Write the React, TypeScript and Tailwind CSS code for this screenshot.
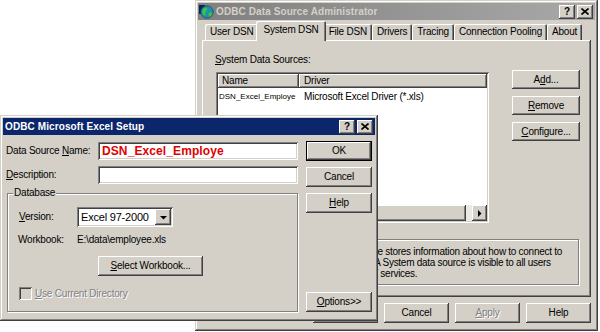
import React from "react";

// classic Win2000 bevels
const raised =
  "shadow-[inset_-1px_-1px_#404040,inset_1px_1px_#ffffff,inset_-2px_-2px_#808080,inset_2px_2px_#d4d0c8]";
const sunken =
  "shadow-[inset_1px_1px_#808080,inset_-1px_-1px_#ffffff,inset_2px_2px_#404040,inset_-2px_-2px_#d4d0c8]";
const frame =
  "shadow-[inset_-1px_-1px_#404040,inset_1px_1px_#d4d0c8,inset_-2px_-2px_#808080,inset_2px_2px_#ffffff]";
const etched = "border border-[#808080] shadow-[1px_1px_0_#ffffff,inset_1px_1px_0_#ffffff]";
const emboss = "text-[#808080] [text-shadow:1px_1px_0_#ffffff]";

type BtnProps = {
  children: React.ReactNode;
  className?: string;
  disabled?: boolean;
  isDefault?: boolean;
};

const Btn = ({ children, className = "", disabled, isDefault }: BtnProps) => (
  <div
    className={`flex items-center justify-center bg-[#d4d0c8] ${
      isDefault
        ? "shadow-[inset_0_0_0_1px_#000000,inset_-2px_-2px_#404040,inset_2px_2px_#ffffff,inset_-3px_-3px_#808080,inset_3px_3px_#d4d0c8]"
        : raised
    } ${disabled ? emboss : "text-black"} ${className}`}
  >
    {children}
  </div>
);

const CloseGlyph = () => (
  <svg width="8" height="7" viewBox="0 0 8 7">
    <path d="M0.5 0.5 L7.5 6.5 M7.5 0.5 L0.5 6.5" stroke="#000" strokeWidth="1.6" />
  </svg>
);

const CaptionButtons = () => (
  <div className="flex gap-[2px] mr-[2px]">
    <div className={`w-[16px] h-[14px] bg-[#d4d0c8] ${raised} flex items-center justify-center text-[10px] font-bold text-black leading-none`}>
      ?
    </div>
    <div className={`w-[16px] h-[14px] bg-[#d4d0c8] ${raised} flex items-center justify-center`}>
      <CloseGlyph />
    </div>
  </div>
);

const Arrow = ({ dir }: { dir: "down" | "right" }) => (
  <svg width="7" height="7" viewBox="0 0 7 7">
    {dir === "down" ? <path d="M0 2 L7 2 L3.5 5.5 Z" fill="#000" /> : <path d="M2 0 L2 7 L5.5 3.5 Z" fill="#000" />}
  </svg>
);

const AdminIcon = () => (
  <svg width="15" height="15" viewBox="0 0 15 15" className="mr-[2px]">
    <rect x="0" y="1" width="6" height="9" fill="#10205a" />
    <circle cx="8" cy="8" r="6.2" fill="#1f8fb0" />
    <path d="M4 5 Q6 3 8 4.5 Q9 6.5 7 7.5 Q5.5 9.5 6.5 12 Q4 11 3 8.5 Z" fill="#3cc43c" />
    <path d="M9.5 9 Q12 8 13.5 9.5 Q12.5 12.5 10 13 Q9.5 11 9.5 9 Z" fill="#3cc43c" />
    <circle cx="8" cy="8" r="6.2" fill="none" stroke="#0a4a5a" strokeWidth="0.7" />
  </svg>
);

const tabs = ["User DSN", "System DSN", "File DSN", "Drivers", "Tracing", "Connection Pooling", "About"];

const AdminWindow = () => (
  <div className={`absolute left-[195px] top-0 w-[403px] h-[331px] bg-[#d4d0c8] p-[3px] flex flex-col ${frame}`}>
    {/* inactive caption */}
    <div className="h-[17px] flex items-center bg-gradient-to-r from-[#808080] to-[#a9a9a9] pl-[1px]">
      <AdminIcon />
      <span className="flex-1 font-bold text-[10px] text-[#d4d0c8] tracking-[0.1px]">ODBC Data Source Administrator</span>
      <CaptionButtons />
    </div>

    <div className="flex flex-col px-[4px]">
      {/* tab strip */}
      <div className="mt-[1px] h-[19px] flex items-end pl-[3px]">
        {tabs.map((t) =>
          t === "System DSN" ? (
            <div
              key={t}
              className="relative z-10 -mx-[2px] mb-[-1px] h-[20px] px-[7px] pb-[2px] flex items-center bg-[#d4d0c8] rounded-t-[2px] shadow-[inset_1px_1px_#ffffff,inset_-1px_0_#404040,inset_-2px_0_#808080]"
            >
              {t}
            </div>
          ) : (
            <div
              key={t}
              className="h-[16px] px-[5px] flex items-center bg-[#d4d0c8] rounded-t-[2px] shadow-[inset_1px_1px_#ffffff,inset_-1px_0_#404040,inset_-2px_0_#808080]"
            >
              {t}
            </div>
          )
        )}
      </div>

      {/* tab page */}
      <div className={`h-[257px] flex flex-col bg-[#d4d0c8] ${raised}`}>
        <div className="flex">
          <div className="ml-[13px] mt-[14px] flex flex-col">
            <div className="h-[12px] leading-[12px]">
              <u>S</u>ystem Data Sources:
            </div>
            <div className={`ml-[1px] mt-[6px] w-[273px] h-[151px] bg-white p-[2px] flex flex-col ${sunken}`}>
              <div className="h-[14px] flex">
                <div className={`w-[81px] pl-[4px] flex items-center bg-[#d4d0c8] ${raised}`}>Name</div>
                <div className={`flex-1 pl-[5px] flex items-center bg-[#d4d0c8] ${raised}`}>Driver</div>
              </div>
              <div className="flex-1 pt-[2px]">
                <div className="flex items-center h-[13px]">
                  <span className="w-[84px] pl-[1px] text-[8px] tracking-[0px]">DSN_Excel_Employe</span>
                  <span className="pl-[2px]">Microsoft Excel Driver (*.xls)</span>
                </div>
              </div>
              {/* horizontal scrollbar */}
              <div className="h-[16px] flex">
                <div className={`w-[16px] bg-[#d4d0c8] ${raised}`} />
                <div className={`flex-1 bg-[#d4d0c8] ${raised}`} />
                <div className="w-[6px] bg-[#ebe9e4]" />
                <div className={`w-[15px] bg-[#d4d0c8] flex items-center justify-center ${raised}`}>
                  <Arrow dir="right" />
                </div>
              </div>
            </div>
          </div>
          <div className="ml-[23px] mt-[30px] flex flex-col gap-[7px]">
            <Btn className="w-[68px] h-[19px]">
              <span>
                A<u>d</u>d...
              </span>
            </Btn>
            <Btn className="w-[68px] h-[19px]">
              <span>
                <u>R</u>emove
              </span>
            </Btn>
            <Btn className="w-[68px] h-[19px]">
              <span>
                <u>C</u>onfigure...
              </span>
            </Btn>
          </div>
        </div>
        <div className={`ml-[14px] mt-[16px] w-[363px] h-[46px] flex items-center pl-[38px] tracking-[-0.28px] ${etched}`}>
          <p className="leading-[11px] whitespace-nowrap">
            An ODBC System data source stores information about how to connect to
            <br />
            the indicated data provider.&nbsp;&nbsp; A System data source is visible to all users
            <br />
            on this machine, including NT services.
          </p>
        </div>
      </div>

      {/* dialog buttons */}
      <div className="mt-[6px] h-[20px] flex justify-end gap-[6px]">
        <Btn className="w-[65px] h-[20px]">OK</Btn>
        <Btn className="w-[65px] h-[20px]">Cancel</Btn>
        <Btn className="w-[65px] h-[20px]" disabled>
          <span>
            <u>A</u>pply
          </span>
        </Btn>
        <Btn className="w-[65px] h-[20px]">Help</Btn>
      </div>
    </div>
  </div>
);

const SetupWindow = () => (
  <div className={`absolute left-0 top-[115px] w-[378px] h-[206px] bg-[#d4d0c8] p-[3px] flex flex-col z-20 ${frame}`}>
    {/* active caption */}
    <div className="h-[17px] flex items-center bg-[#0c266c] pl-[2px]">
      <span className="flex-1 font-bold text-[10px] text-white tracking-[0.1px]">ODBC Microsoft Excel Setup</span>
      <CaptionButtons />
    </div>

    <div className="flex-1 flex pl-[3px]">
      <div className="w-[292px] pt-[7px] flex flex-col">
        <div className="flex items-center h-[18px]">
          <span className="w-[92px]">
            Data Source <u>N</u>ame:
          </span>
          <div className={`w-[200px] h-[18px] bg-white pl-[4px] flex items-center ${sunken}`}>
            <span className="text-[12px] font-bold text-[#e00000] tracking-[0.1px]">DSN_Excel_Employe</span>
          </div>
        </div>
        <div className="flex items-center h-[18px] mt-[6px]">
          <span className="w-[92px]">
            <u>D</u>escription:
          </span>
          <div className={`w-[200px] h-[18px] bg-white ${sunken}`} />
        </div>

        {/* Database group */}
        <div className={`relative mt-[9px] ml-[1px] w-[291px] h-[119px] pl-[11px] pt-[13px] flex flex-col ${etched}`}>
          <span className="absolute -top-[7px] left-[5px] px-[1px] bg-[#d4d0c8] leading-[12px]">Database</span>
          <div className="flex items-center h-[20px]">
            <span className="w-[58px]">
              <u>V</u>ersion:
            </span>
            <div className={`w-[96px] h-[20px] bg-white p-[2px] flex items-center ${sunken}`}>
              <span className="flex-1 pl-[2px] text-[11px]">Excel 97-2000</span>
              <div className={`w-[16px] h-[16px] bg-[#d4d0c8] flex items-center justify-center ${raised}`}>
                <Arrow dir="down" />
              </div>
            </div>
          </div>
          <div className="flex items-center h-[12px] mt-[7px]">
            <span className="w-[59px] -ml-[1px]">Workbook:</span>
            <span>E:\data\employee.xls</span>
          </div>
          <Btn className="mt-[10px] ml-[79px] w-[105px] h-[20px]">
            <span>
              <u>S</u>elect Workbook...
            </span>
          </Btn>
          <div className="mt-[11px] flex items-center gap-[3px] h-[13px]">
            <div className={`w-[13px] h-[13px] bg-[#d4d0c8] ${sunken}`} />
            <span className={emboss}>
              <u>U</u>se Current Directory
            </span>
          </div>
        </div>
      </div>

      <div className="ml-[8px] w-[66px] pt-[6px] pb-[6px] flex flex-col gap-[6px]">
        <Btn className="h-[20px]" isDefault>
          OK
        </Btn>
        <Btn className="h-[20px]">Cancel</Btn>
        <Btn className="h-[20px]">
          <span>
            <u>H</u>elp
          </span>
        </Btn>
        <Btn className="h-[20px] mt-auto">
          <span>
            <u>O</u>ptions&gt;&gt;
          </span>
        </Btn>
      </div>
    </div>
  </div>
);

export default function App() {
  return (
    <div className="relative w-[600px] h-[332px] overflow-hidden bg-white font-['Liberation_Sans',Arial,sans-serif] text-[10px] leading-[12px] tracking-[-0.2px] text-black">
      <AdminWindow />
      <SetupWindow />
    </div>
  );
}
